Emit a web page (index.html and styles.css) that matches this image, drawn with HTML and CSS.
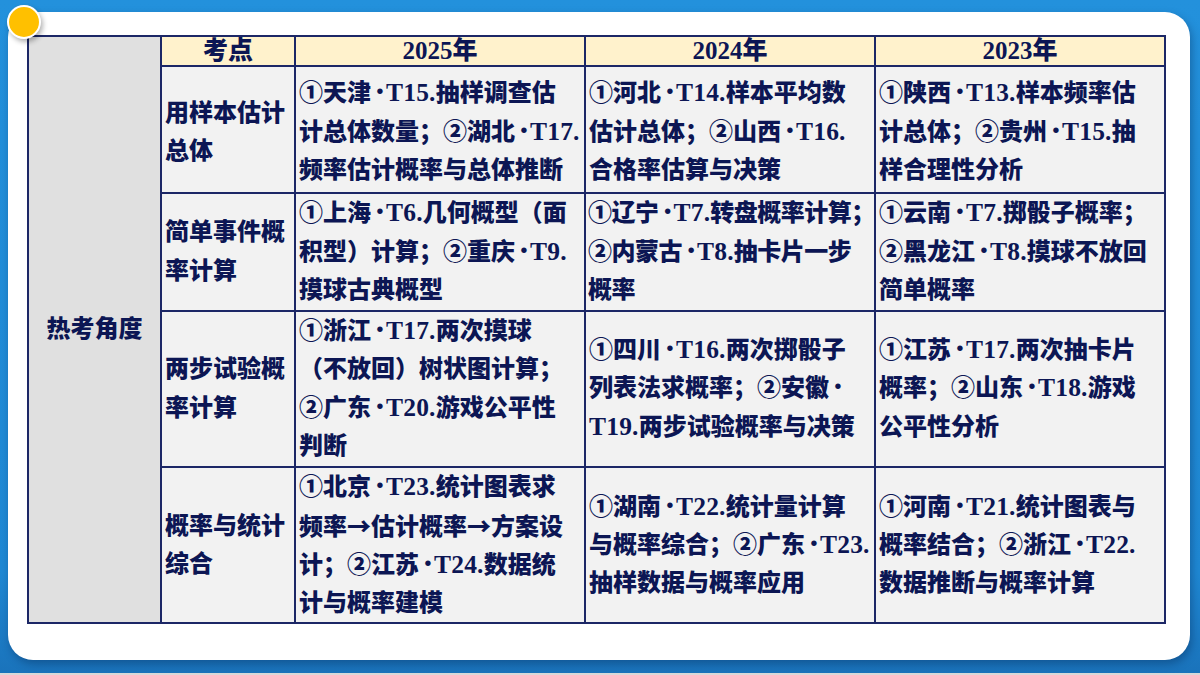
FILE: index.html
```html
<!DOCTYPE html>
<html lang="zh-CN">
<head>
<meta charset="utf-8">
<link rel="stylesheet" href="styles.css">
</head>
<body>
<div class="frame">
  <div class="badge"></div>
  <div class="card">
    <table class="grid">
      <colgroup>
        <col class="c-side"><col class="c-topic"><col class="c-year"><col class="c-year"><col class="c-year">
      </colgroup>
      <tr class="head">
        <td class="side" rowspan="5">热考角度</td>
        <th>考点</th><th>2025年</th><th>2024年</th><th>2023年</th>
      </tr>
      <tr class="r1">
        <td class="topic">用样本估计<br>总体</td>
        <td>①天津<span class="md">·</span><span class="tn">T15.</span>抽样调查估<br>计总体数量；②湖北<span class="md">·</span><span class="tn">T17.</span><br>频率估计概率与总体推断</td>
        <td>①河北<span class="md">·</span><span class="tn">T14.</span>样本平均数<br>估计总体；②山西<span class="md">·</span><span class="tn">T16.</span><br>合格率估算与决策</td>
        <td>①陕西<span class="md">·</span><span class="tn">T13.</span>样本频率估<br>计总体；②贵州<span class="md">·</span><span class="tn">T15.</span>抽<br>样合理性分析</td>
      </tr>
      <tr class="r2">
        <td class="topic">简单事件概<br>率计算</td>
        <td>①上海<span class="md">·</span><span class="tn">T6.</span>几何概型（面<br>积型）计算；②重庆<span class="md">·</span><span class="tn">T9.</span><br>摸球古典概型</td>
        <td class="tight">①辽宁<span class="md">·</span><span class="tn">T7.</span>转盘概率计算；<br>②内蒙古<span class="md">·</span><span class="tn">T8.</span>抽卡片一步<br>概率</td>
        <td>①云南<span class="md">·</span><span class="tn">T7.</span>掷骰子概率；<br>②黑龙江<span class="md">·</span><span class="tn">T8.</span>摸球不放回<br>简单概率</td>
      </tr>
      <tr class="r3">
        <td class="topic">两步试验概<br>率计算</td>
        <td>①浙江<span class="md">·</span><span class="tn">T17.</span>两次摸球<br>（不放回）树状图计算；<br>②广东<span class="md">·</span><span class="tn">T20.</span>游戏公平性<br>判断</td>
        <td>①四川<span class="md">·</span><span class="tn">T16.</span>两次掷骰子<br>列表法求概率；②安徽<span class="md">·</span><br><span class="tn">T19.</span>两步试验概率与决策</td>
        <td>①江苏<span class="md">·</span><span class="tn">T17.</span>两次抽卡片<br>概率；②山东<span class="md">·</span><span class="tn">T18.</span>游戏<br>公平性分析</td>
      </tr>
      <tr class="r4">
        <td class="topic">概率与统计<br>综合</td>
        <td>①北京<span class="md">·</span><span class="tn">T23.</span>统计图表求<br>频率<span class="arr">→</span>估计概率<span class="arr">→</span>方案设<br>计；②江苏<span class="md">·</span><span class="tn">T24.</span>数据统<br>计与概率建模</td>
        <td>①湖南<span class="md">·</span><span class="tn">T22.</span>统计量计算<br>与概率综合；②广东<span class="md">·</span><span class="tn">T23.</span><br>抽样数据与概率应用</td>
        <td>①河南<span class="md">·</span><span class="tn">T21.</span>统计图表与<br>概率结合；②浙江<span class="md">·</span><span class="tn">T22.</span><br>数据推断与概率计算</td>
      </tr>
    </table>
  </div>
</div>
</body>
</html>
```

FILE: styles.css
```css
* { box-sizing: border-box; }
html, body { margin: 0; padding: 0; }
body {
  background: #d9d9d9;
  width: 1200px;
  height: 675px;
  overflow: hidden;
  font-family: "Liberation Serif", "Noto Sans CJK SC", serif;
}
.frame {
  position: relative;
  width: 1200px;
  height: 673px;
  padding: 12px 10px 13px 8px;
  background: linear-gradient(180deg, #2391dc 0%, #1f88d4 85%, #1a73bb 100%);
}
.card {
  width: 1182px;
  height: 648px;
  background: #ffffff;
  border-radius: 25px;
  padding: 23px 0 0 19px;
  box-shadow: 2px 4px 8px rgba(0, 30, 70, 0.35);
}
.badge {
  position: absolute;
  left: 7px;
  top: 5px;
  width: 34px;
  height: 34px;
  border-radius: 50%;
  background: #ffc000;
  border: 2px solid #ffffff;
  box-shadow: 2px 3px 5px rgba(0, 0, 0, 0.3);
  z-index: 2;
}
.grid {
  border-collapse: collapse;
  table-layout: fixed;
  width: 1139px;
  color: #0c1654;
  font-weight: 900;
  font-size: 24px;
}
.c-side { width: 133px; }
.c-topic { width: 134px; }
.c-year { width: 290px; }
.grid td, .grid th {
  border: 2px solid #1c2766;
  background: #f2f2f2;
  padding: 3px 0 0 3px;
  line-height: 38.5px;
  text-align: left;
  vertical-align: middle;
  white-space: nowrap;
  overflow: hidden;
}
.grid th {
  background: #fff2cc;
  text-align: center;
  height: 30px;
  line-height: 26px;
  padding: 0;
  font-weight: 900;
  font-size: 25px;
}
.grid td.side {
  background: #e0e0e0;
  text-align: center;
  padding: 0;
}
.grid td.tight {
  letter-spacing: -0.5px;
  padding-left: 2px;
}
.md {
  display: inline-block;
  width: 15px;
  padding-left: 3px;
  text-align: center;
  font-weight: 900;
  font-size: 34px;
  line-height: 20px;
  vertical-align: -1px;
}
.tn {
  font-size: 25.5px;
  letter-spacing: 0.2px;
}
.arr {
  font-family: "Noto Sans CJK SC", sans-serif;
}
.r1 td { height: 127px; padding-top: 5px; }
.r2 td { height: 114px; padding-top: 0; }
.r3 td { height: 154px; padding-top: 0; }
.r4 td { height: 152px; padding-top: 0; line-height: 38px; }
```
